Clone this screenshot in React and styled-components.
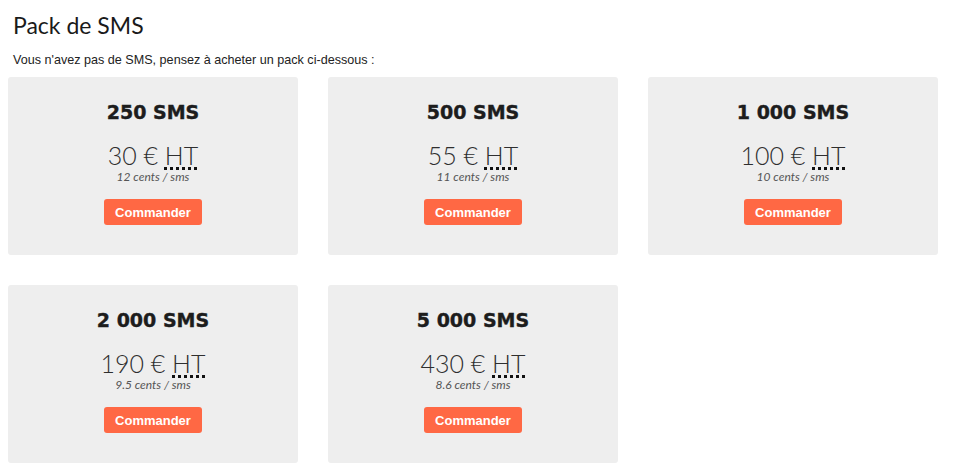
import React from 'react'
import styled, { createGlobalStyle } from 'styled-components'

const GlobalStyle = createGlobalStyle`
  body {
    margin: 0;
    background: #fff;
    font-family: "Liberation Sans", Arial, sans-serif;
    color: #222;
  }
`

const Page = styled.div`
  padding: 10px 8px 8px;
`

const Title = styled.h1`
  margin: 0 0 0 5px;
  font-family: Lato, "Open Sans", sans-serif;
  font-weight: 400;
  font-size: 23px;
  line-height: 30px;
  color: #1a1a1a;
`

const Intro = styled.p`
  margin: 13px 0 9px 5px;
  font-size: 12.6px;
  line-height: 15px;
  color: #222;
`

const Grid = styled.div`
  display: grid;
  grid-template-columns: repeat(3, 290px);
  column-gap: 30px;
  row-gap: 30px;
`

const Card = styled.div`
  height: 178px;
  background: #eeeeee;
  border-radius: 3px;
  display: flex;
  flex-direction: column;
  align-items: center;
  padding-top: 23px;
  box-sizing: border-box;
`

const Name = styled.h2`
  margin: 0;
  font-family: "DejaVu Sans", sans-serif;
  font-weight: 700;
  font-size: 19px;
  line-height: 24px;
  color: #1d1d1d;
  -webkit-text-stroke: 0.4px #1d1d1d;
`

const Price = styled.div`
  margin-top: 17px;
  font-family: Lato, sans-serif;
  font-weight: 300;
  font-size: 25px;
  line-height: 28px;
  color: #2e2e2e;
`

const Abbr = styled.abbr`
  text-decoration: underline dotted #111;
  text-decoration-thickness: 3px;
  text-underline-offset: 2px;
`

const Unit = styled.div`
  margin-top: 1px;
  font-family: Lato, sans-serif;
  font-style: italic;
  font-size: 12px;
  line-height: 14px;
  color: #555;
`

const Button = styled.button`
  margin-top: 15px;
  height: 26px;
  padding: 0 11px;
  border: none;
  border-radius: 3px;
  background: #ff6844;
  color: #fff;
  font-family: "Liberation Sans", Arial, sans-serif;
  font-weight: 700;
  font-size: 13px;
  cursor: pointer;
`

const packs = [
  { name: '250 SMS', price: '30', unit: '12 cents / sms' },
  { name: '500 SMS', price: '55', unit: '11 cents / sms' },
  { name: '1 000 SMS', price: '100', unit: '10 cents / sms' },
  { name: '2 000 SMS', price: '190', unit: '9.5 cents / sms' },
  { name: '5 000 SMS', price: '430', unit: '8.6 cents / sms' },
]

export default function App() {
  return (
    <Page>
      <GlobalStyle />
      <Title>Pack de SMS</Title>
      <Intro>Vous n'avez pas de SMS, pensez à acheter un pack ci-dessous :</Intro>
      <Grid>
        {packs.map(p => (
          <Card key={p.name}>
            <Name>{p.name}</Name>
            <Price>
              {p.price} € <Abbr title="Hors taxes">HT</Abbr>
            </Price>
            <Unit>{p.unit}</Unit>
            <Button>Commander</Button>
          </Card>
        ))}
      </Grid>
    </Page>
  )
}
